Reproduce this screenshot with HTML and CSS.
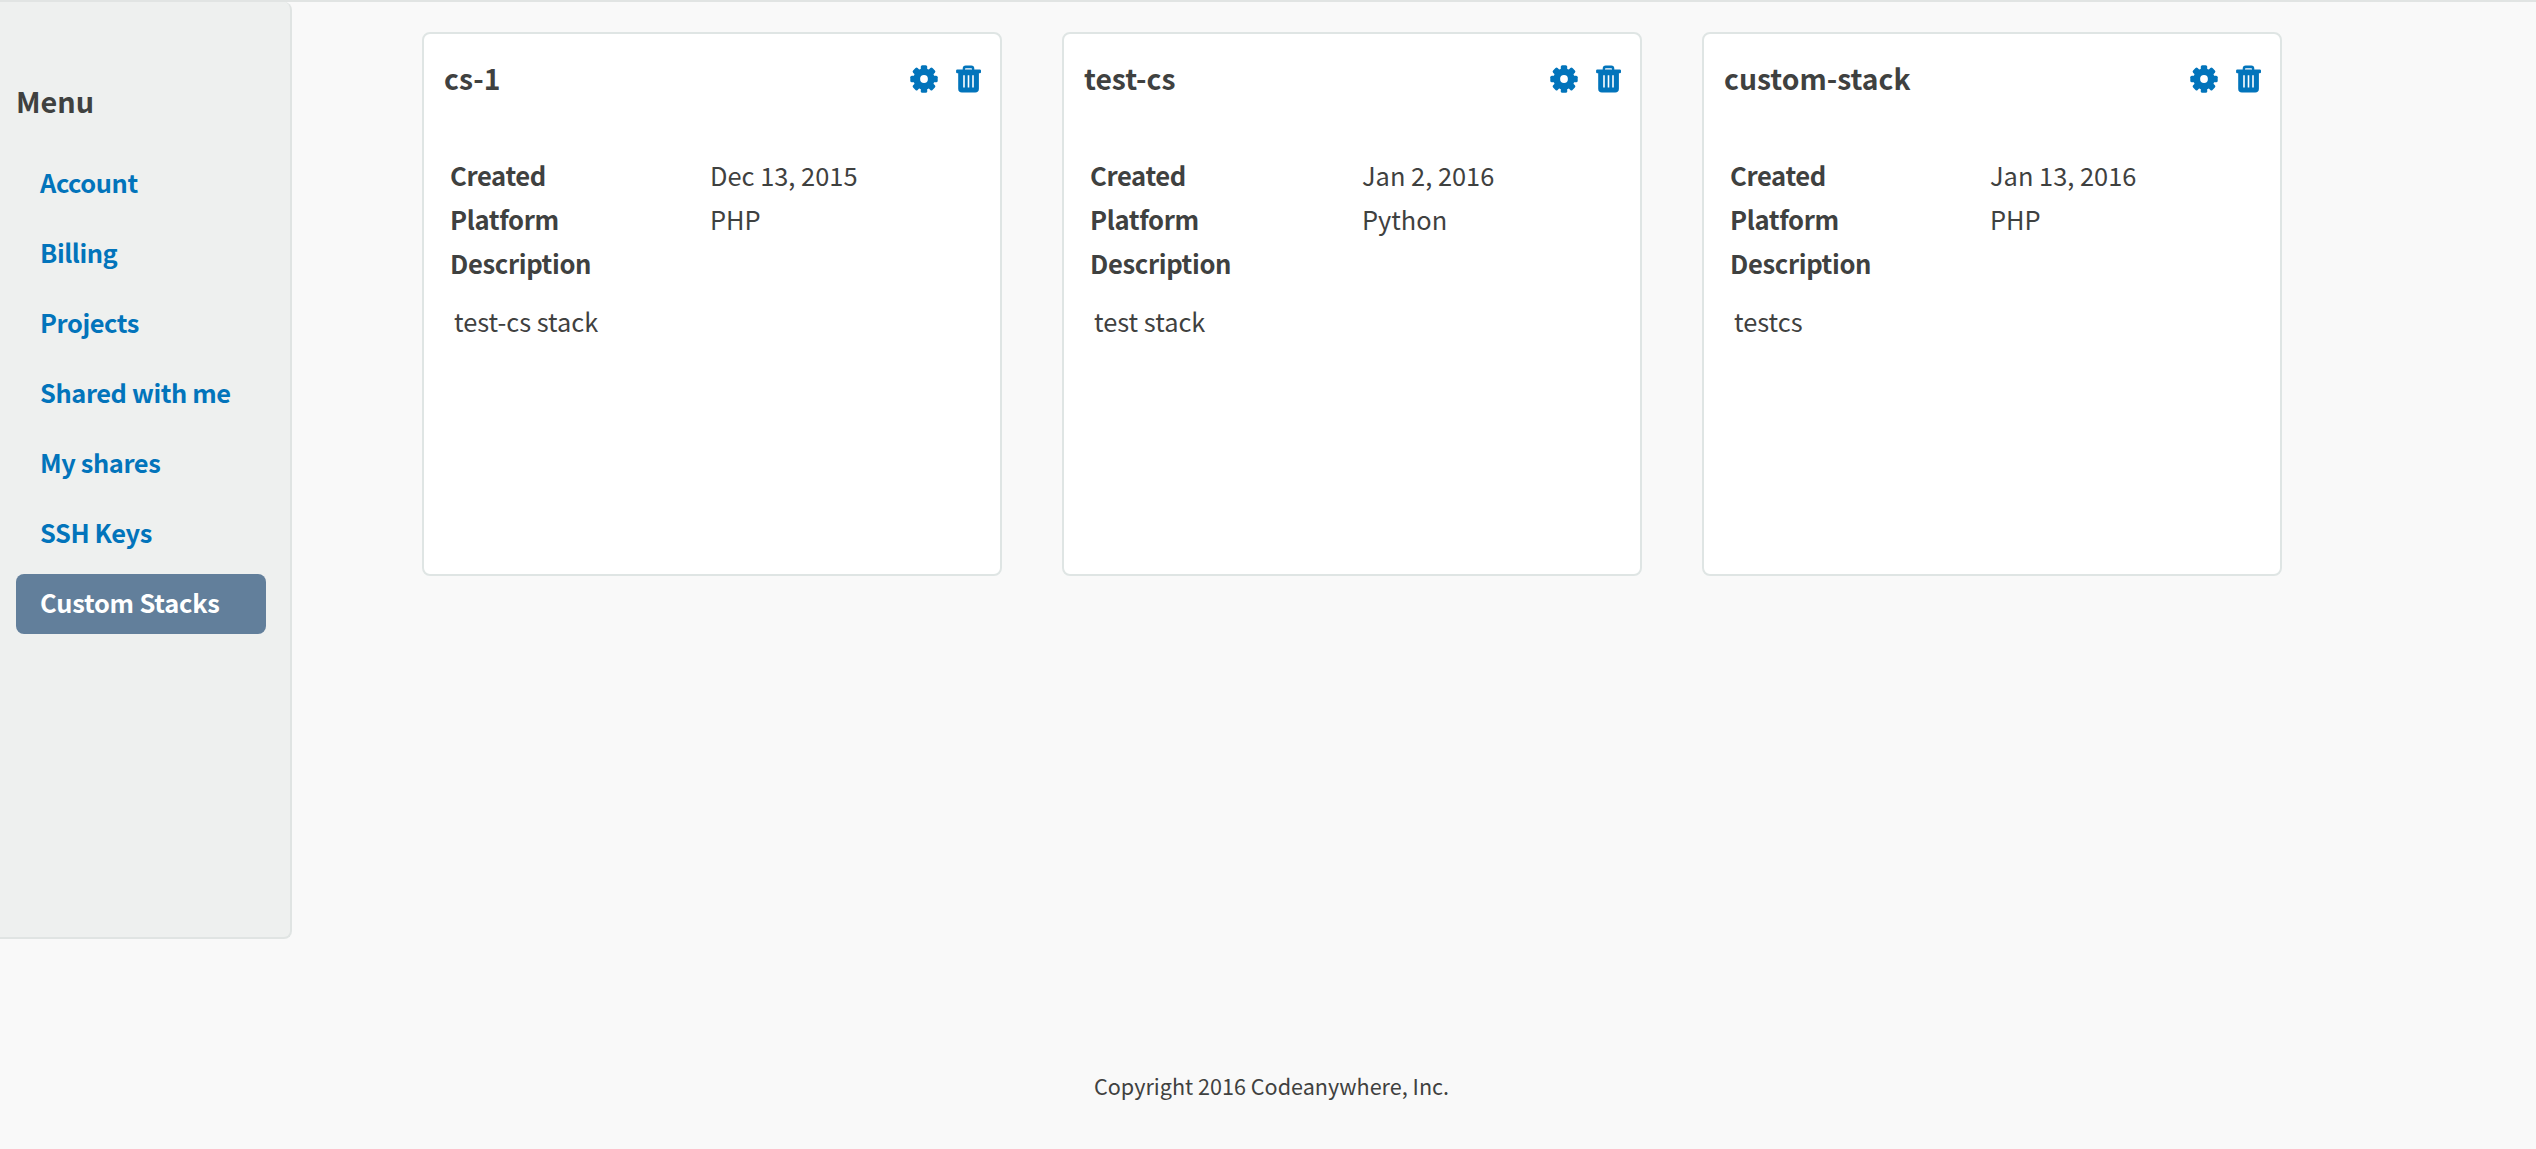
FILE: index.html
```html
<!DOCTYPE html>
<html lang="en">
<head>
<meta charset="utf-8">
<title>Custom Stacks</title>
<link rel="stylesheet" href="styles.css">
</head>
<body>
<svg class="sprite" width="0" height="0" aria-hidden="true">
  <symbol id="gear" viewBox="-14 -14 28 28">
    <g>
      <circle r="10.6"/>
      <rect id="tooth" x="-3.2" y="-13.7" width="6.4" height="27.4" rx="1.5"/>
      <use href="#tooth" transform="rotate(45)"/>
      <use href="#tooth" transform="rotate(90)"/>
      <use href="#tooth" transform="rotate(135)"/>
    </g>
    <circle class="gear-hole" r="3.9"/>
  </symbol>
  <symbol id="trash" viewBox="0 0 26 28">
    <path fill-rule="evenodd" d="M1.3 4.5H6.7V3.6Q6.7.4 9.8.4H15.2Q18.3.4 18.3 3.6V4.5H23.7Q25 4.5 25 5.6V7.2Q25 8.3 23.7 8.3H22.9V23.8Q22.9 27.6 19.1 27.6H6Q2.2 27.6 2.2 23.8V8.3H1.3Q.1 8.3.1 7.2V5.6Q.1 4.5 1.3 4.5ZM9 4.5H16V3.9Q16 3.2 15.2 3.2H9.8Q9 3.2 9 3.9Z"/>
    <path class="slots" d="M8 10.2V22.4M12.5 10.2V22.4M17 10.2V22.4"/>
  </symbol>
</svg>
<div class="layout">
  <nav class="sidebar">
    <h2 class="menu-title">Menu</h2>
    <ul class="menu">
      <li><a class="menu-link">Account</a></li>
      <li><a class="menu-link">Billing</a></li>
      <li><a class="menu-link">Projects</a></li>
      <li><a class="menu-link">Shared with me</a></li>
      <li><a class="menu-link">My shares</a></li>
      <li><a class="menu-link">SSH Keys</a></li>
      <li><a class="menu-link active">Custom Stacks</a></li>
    </ul>
  </nav>
  <main class="cards">
    <section class="card">
      <header class="card-head">
        <h3 class="card-title">cs-1</h3>
        <svg class="icon-gear"><use href="#gear"/></svg>
        <svg class="icon-trash"><use href="#trash"/></svg>
      </header>
      <dl class="facts">
        <dt>Created</dt><dd>Dec 13, 2015</dd>
        <dt>Platform</dt><dd>PHP</dd>
        <dt>Description</dt><dd></dd>
      </dl>
      <p class="description">test-cs stack</p>
    </section>
    <section class="card">
      <header class="card-head">
        <h3 class="card-title">test-cs</h3>
        <svg class="icon-gear"><use href="#gear"/></svg>
        <svg class="icon-trash"><use href="#trash"/></svg>
      </header>
      <dl class="facts facts-wide">
        <dt>Created</dt><dd>Jan 2, 2016</dd>
        <dt>Platform</dt><dd>Python</dd>
        <dt>Description</dt><dd></dd>
      </dl>
      <p class="description">test stack</p>
    </section>
    <section class="card">
      <header class="card-head">
        <h3 class="card-title">custom-stack</h3>
        <svg class="icon-gear"><use href="#gear"/></svg>
        <svg class="icon-trash"><use href="#trash"/></svg>
      </header>
      <dl class="facts">
        <dt>Created</dt><dd>Jan 13, 2016</dd>
        <dt>Platform</dt><dd>PHP</dd>
        <dt>Description</dt><dd></dd>
      </dl>
      <p class="description">testcs</p>
    </section>
  </main>
</div>
<footer class="footer">Copyright 2016 Codeanywhere, Inc.</footer>
</body>
</html>
```
FILE: styles.css
```css
* { box-sizing: border-box; margin: 0; padding: 0; }

body {
  height: 1149px;
  overflow: hidden;
  background: #f9f9f9;
  border-top: 2px solid #e1e4e3;
  color: #3f4140;
  font-family: "Source Sans Pro", "Noto Sans CJK SC", sans-serif;
  font-size: 25.4px;
}

.sprite { display: block; }

.layout { display: flex; align-items: flex-start; }

.sidebar {
  width: 292px;
  height: 937px;
  padding: 81px 24px 0 16px;
  background: #eef0ef;
  border: solid #e0e4e3;
  border-width: 0 2px 2px 0;
  border-radius: 0 8px 8px 0;
}

.menu-title { font-size: 28.8px; line-height: 36px; font-weight: 700; }

.menu {
  display: flex;
  flex-direction: column;
  gap: 10px;
  margin-top: 35px;
  list-style: none;
}

.menu-link {
  display: block;
  height: 60px;
  padding-left: 24px;
  border-radius: 8px;
  color: #0274bb;
  font-size: 25.4px;
  font-weight: 700;
  letter-spacing: -0.4px;
  line-height: 57px;
}

.menu-link.active { background: #627f9b; color: #fff; letter-spacing: -0.2px; }

.cards { display: flex; gap: 60px; padding: 30px 0 0 130px; }

.card {
  width: 580px;
  height: 544px;
  background: #fff;
  border: 2px solid #dfe5e4;
  border-radius: 8px;
}

.card-head {
  display: flex;
  align-items: center;
  height: 90px;
  padding: 0 18px 0 20px;
}

.card-title { flex: 1; font-size: 28.3px; line-height: 40px; padding-bottom: 2px; font-weight: 700; }

.icon-gear, .icon-trash { height: 28px; fill: #0274bb; }
.icon-gear { width: 28px; margin-right: 18px; }
.icon-trash { width: 26px; }
.gear-hole { fill: #fff; }
.slots { fill: none; stroke: #fff; stroke-width: 1.6; }

.facts {
  display: grid;
  grid-template-columns: 260px 1fr;
  grid-auto-rows: 44px;
  margin: 29px 0 0 26px;
  line-height: 44px;
}

.facts-wide { grid-template-columns: 272px 1fr; }
.facts dt { font-size: 25.6px; font-weight: 700; letter-spacing: -0.35px; }

.description { margin: 14px 0 0 30px; line-height: 44px; }

.footer {
  margin-top: 131px;
  padding-left: 1094px;
  font-size: 21.6px;
  line-height: 32px;
}
```
